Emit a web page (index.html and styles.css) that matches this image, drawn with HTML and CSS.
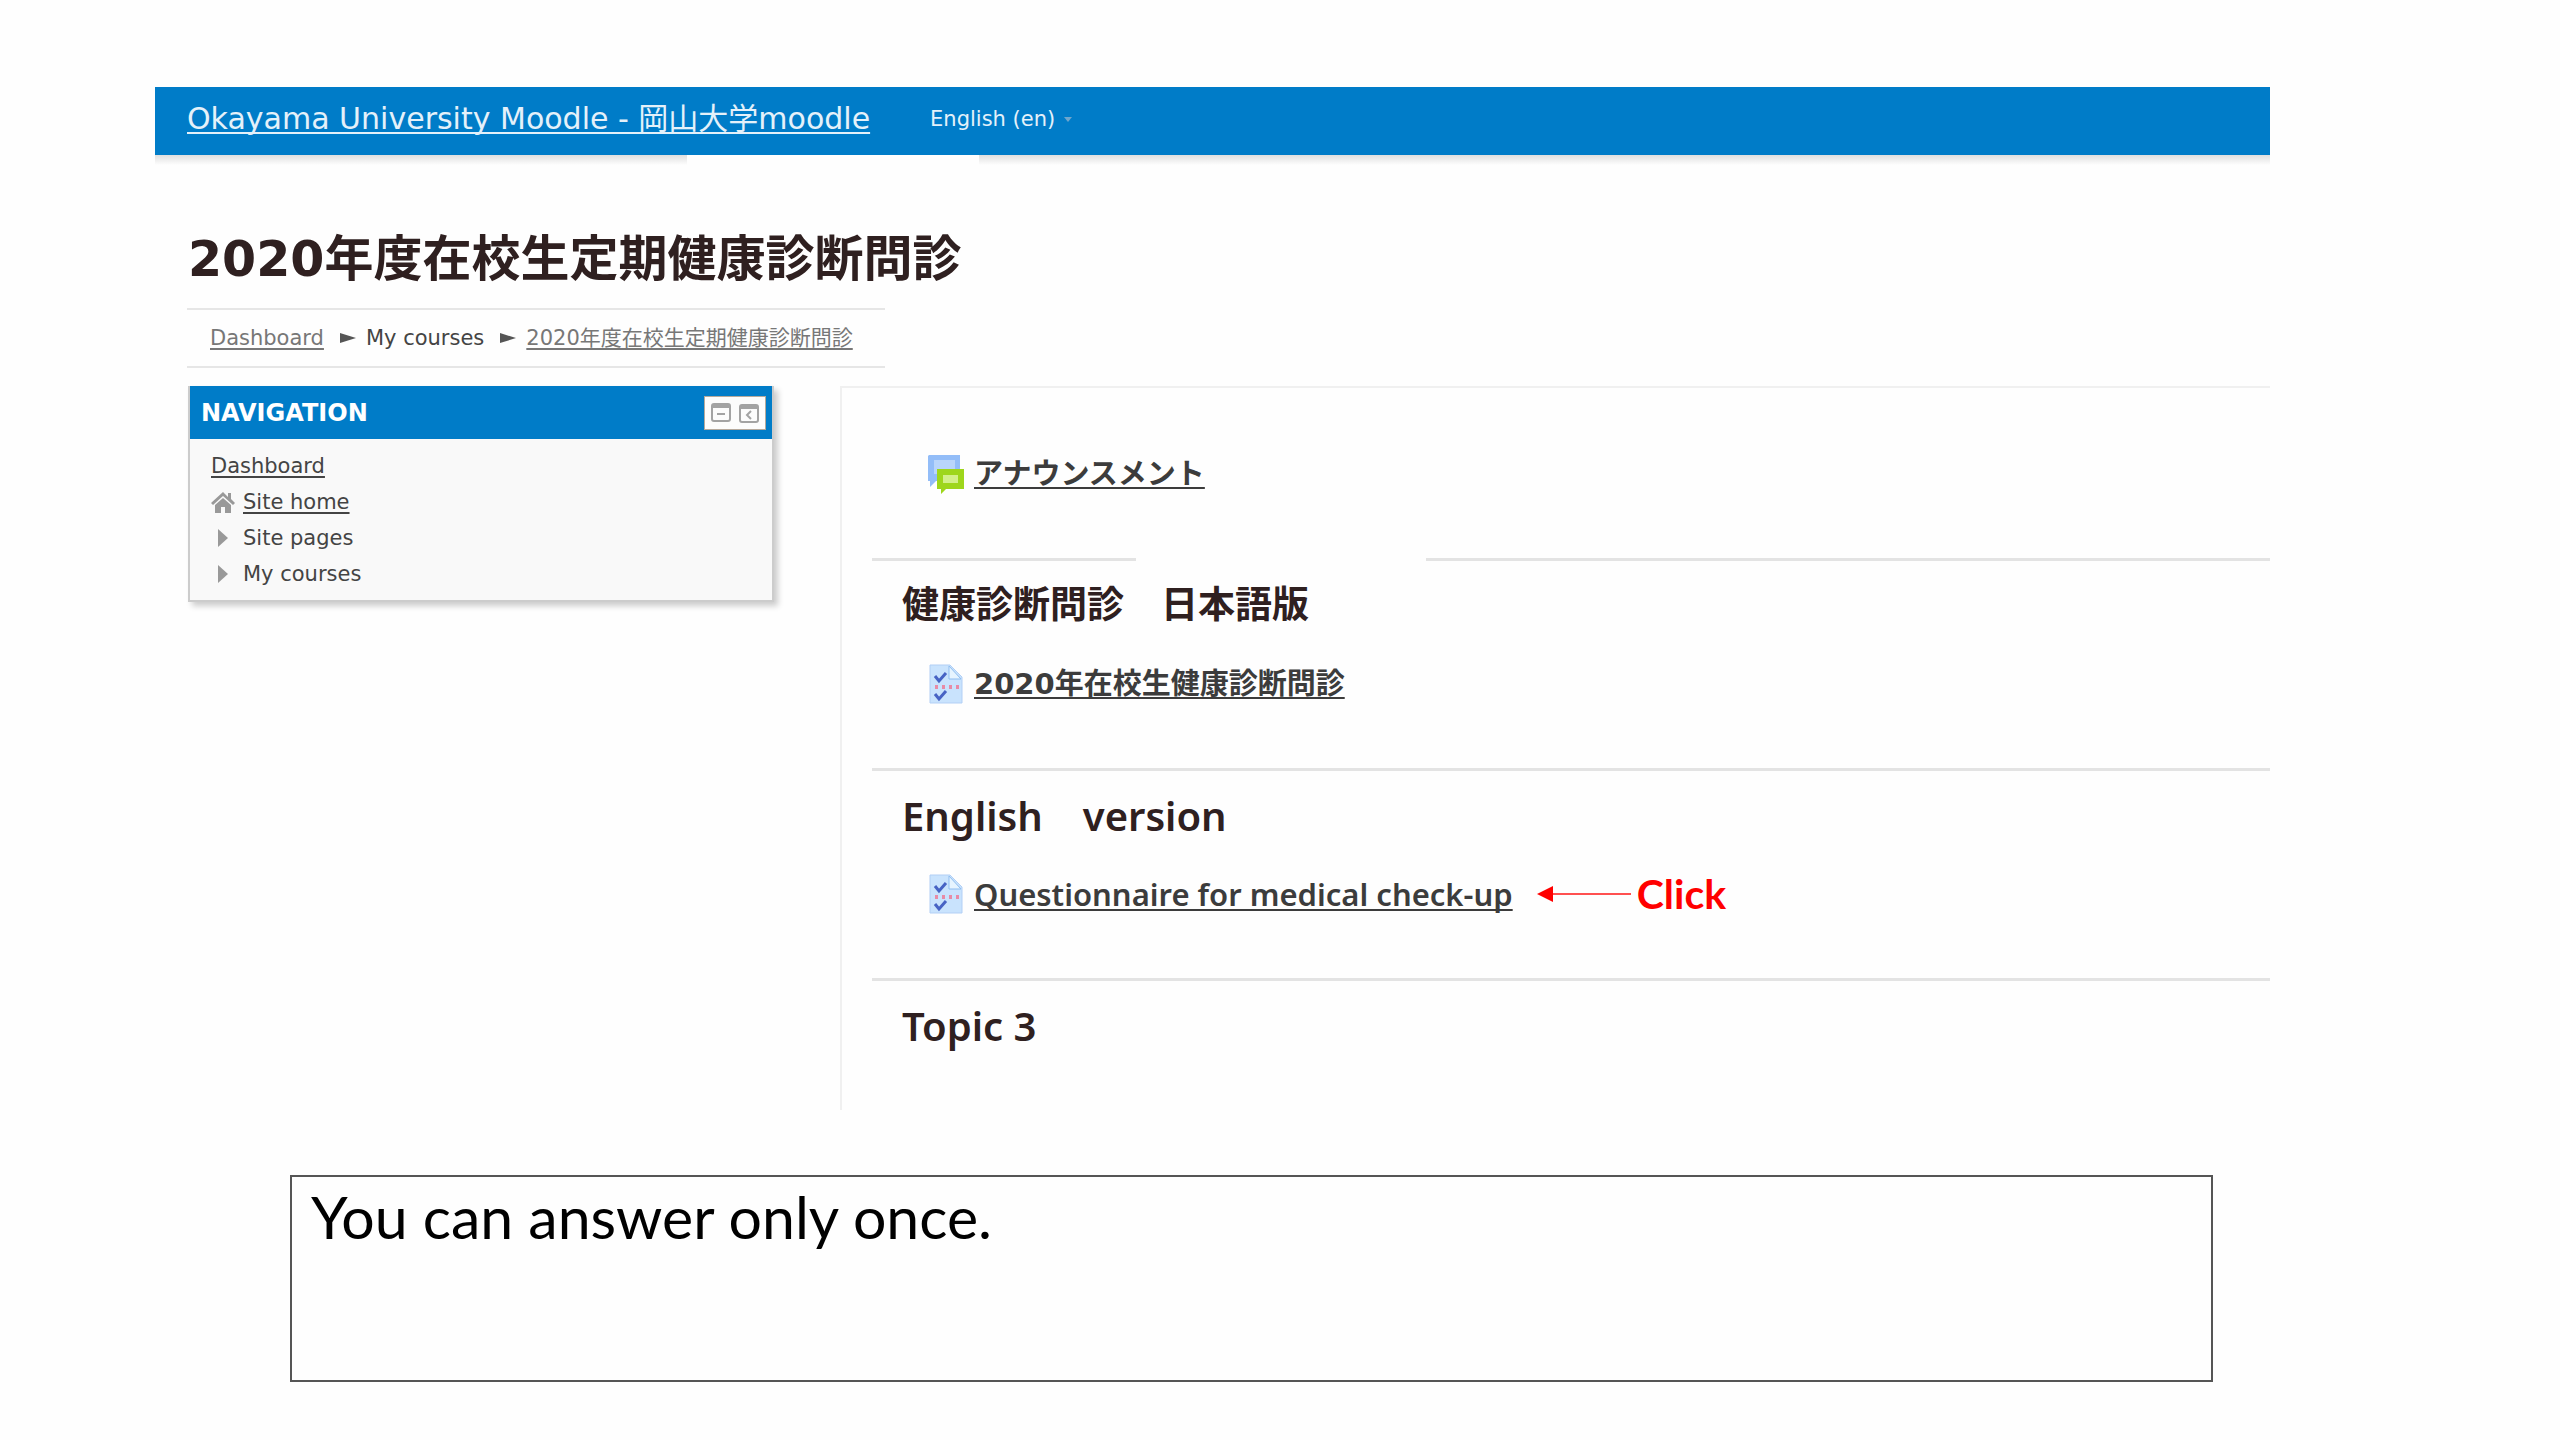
FILE: index.html
```html
<!DOCTYPE html>
<html lang="en">
<head>
    <meta charset="UTF-8">
    <meta name="viewport" content="width=device-width, initial-scale=1.0">
    <title>2020年度在校生定期健康診断問診</title>
    <link rel="stylesheet" href="styles.css">
</head>
<body>
    <!-- Shared activity icon -->
    <svg class="sprite" aria-hidden="true">
        <symbol id="icon-quiz" viewBox="0 0 34 40">
            <path d="M1 1h20l12 12v26H1z" fill="#c9e3fd" stroke="#b2cff5"/>
            <path d="M20 2v13h12z" fill="#e6f4ff" stroke="#8fbdf0"/>
            <path d="M6 12l4 5 7-8M6 30l4 5 7-8" fill="none" stroke="#4763c4" stroke-width="3"/>
            <path d="M6 23h25" stroke="#e88ba6" stroke-width="4" stroke-dasharray="3 4"/>
        </symbol>
    </svg>

    <div class="page">
        <header class="navbar">
            <a class="brand" href="#">Okayama University Moodle - 岡山大学moodle</a>
            <div class="language">
                <select aria-label="Language">
                    <option>English (en)</option>
                </select>
                <svg class="caret" viewBox="0 0 8 5" aria-hidden="true"><path d="M0 0h8l-4 5z"/></svg>
            </div>
        </header>
        <div class="navbar-shadow"><span></span><span></span></div>

        <h1>2020年度在校生定期健康診断問診</h1>

        <nav class="breadcrumb" aria-label="Breadcrumb">
            <a href="#">Dashboard</a>
            <svg viewBox="0 0 16 10" aria-hidden="true"><path d="M0 0l16 5-16 5z"/></svg>
            <span>My courses</span>
            <svg viewBox="0 0 16 10" aria-hidden="true"><path d="M0 0l16 5-16 5z"/></svg>
            <a href="#">2020年度在校生定期健康診断問診</a>
        </nav>

        <div class="columns">
            <aside class="block">
                <div class="block-header">
                    <h2>NAVIGATION</h2>
                    <div class="block-actions">
                        <button type="button" aria-label="Hide block">
                            <svg viewBox="0 0 20 20"><rect x="1" y="1" width="18" height="17" rx="2"/><path d="M1 3h18" stroke-width="4"/><path d="M6 11h8"/></svg>
                        </button>
                        <button type="button" aria-label="Dock block">
                            <svg viewBox="0 0 20 20"><rect x="1" y="2" width="18" height="17" rx="2"/><path d="M1 4h18" stroke-width="4"/><path d="M12 8l-4 4 4 4"/></svg>
                        </button>
                    </div>
                </div>
                <ul class="tree">
                    <li><a href="#">Dashboard</a></li>
                    <li>
                        <svg viewBox="0 0 24 22" aria-hidden="true"><path d="M12 1l5 5V2h3v6l4 4-2 2L12 5 2 14l-2-2z"/><path d="M4 14l8-7 8 7v8h-6v-6h-4v6H4z"/></svg>
                        <a href="#">Site home</a>
                    </li>
                    <li>
                        <svg viewBox="0 0 24 22" aria-hidden="true"><path d="M7 2l10 9-10 9z"/></svg>
                        <span>Site pages</span>
                    </li>
                    <li>
                        <svg viewBox="0 0 24 22" aria-hidden="true"><path d="M7 2l10 9-10 9z"/></svg>
                        <span>My courses</span>
                    </li>
                </ul>
            </aside>

            <main class="course">
                <section class="topic">
                    <div class="activity">
                        <svg class="activity-icon" viewBox="0 0 38 40" aria-hidden="true">
                            <path d="M2 1h31v26H9l-6 6V27H1V2z" fill="#93bdf8"/>
                            <path d="M7 6h21v14H7z" fill="#b9d5fb"/>
                            <path d="M10 15h27v20H19l-5 5v-5h-4z" fill="#9ed61c"/>
                            <path d="M16 21h15v8H16z" fill="#d3f08a"/>
                        </svg>
                        <a href="#">アナウンスメント</a>
                    </div>
                </section>

                <div class="divider divider-split"><span></span><span></span></div>
                <section class="topic">
                    <h3>健康診断問診　日本語版</h3>
                    <div class="activity">
                        <svg class="activity-icon" aria-hidden="true"><use href="#icon-quiz"/></svg>
                        <a href="#">2020年在校生健康診断問診</a>
                    </div>
                </section>

                <div class="divider"><span></span></div>
                <section class="topic">
                    <h3 class="latin">English　version</h3>
                    <div class="activity latin">
                        <svg class="activity-icon" aria-hidden="true"><use href="#icon-quiz"/></svg>
                        <a href="#">Questionnaire for medical check-up</a>
                        <span class="hint">
                            <svg viewBox="0 0 94 16" aria-hidden="true"><path d="M14 8h80" stroke="#ff5050" stroke-width="2"/><path d="M0 8l16-8v16z" fill="#ff0000"/></svg>
                            Click
                        </span>
                    </div>
                </section>

                <div class="divider"><span></span></div>
                <section class="topic">
                    <h3 class="latin">Topic 3</h3>
                </section>
            </main>
        </div>
    </div>

    <p class="note">You can answer only once.</p>
</body>
</html>
```
FILE: styles.css
```css
* {
    box-sizing: border-box;
}
body {
    margin: 0;
    padding: 87px 290px 56px 155px;
    background: #fefefe;
    color: #444;
    font-family: "DejaVu Sans", "Noto Sans CJK JP", sans-serif;
    font-size: 21px;
}
h1, h2, h3, p, ul {
    margin: 0;
    padding: 0;
}
a {
    color: inherit;
    text-decoration: underline;
    text-decoration-thickness: 2px;
    text-underline-offset: 3px;
    text-decoration-skip-ink: none;
}
.sprite {
    display: none;
}

/* Top bar */
.navbar {
    display: flex;
    align-items: center;
    gap: 60px;
    height: 68px;
    padding: 0 32px 4px;
    background: #007cc8;
    color: #e4f1fa;
}
.brand {
    font-size: 30px;
    line-height: 36px;
}
.language {
    display: flex;
    align-items: center;
    gap: 8px;
}
.language select {
    appearance: none;
    padding: 0;
    border: 0;
    background: none;
    color: inherit;
    font: inherit;
}
.caret {
    width: 8px;
    height: 5px;
    fill: #6fa6cc;
}
.navbar-shadow {
    display: flex;
    gap: 292px;
    height: 10px;
}
.navbar-shadow span {
    width: 532px;
    background: linear-gradient(#dfdfdf, #fefefe);
}
.navbar-shadow span:last-child {
    flex: 1;
}

/* Heading and breadcrumb */
h1 {
    padding: 60px 33px 13px;
    color: #2f2020;
    font-size: 49px;
    line-height: 70px;
}
.breadcrumb {
    display: flex;
    align-items: center;
    width: fit-content;
    height: 60px;
    margin: 0 32px;
    padding: 0 32px 0 23px;
    border: solid #e6e6e6;
    border-width: 2px 0;
    line-height: 28px;
}
.breadcrumb a {
    color: #777;
}
.breadcrumb svg {
    width: 16px;
    height: 10px;
    margin: 0 10px 0 16px;
    fill: #555;
}

.columns {
    display: flex;
    align-items: flex-start;
    gap: 66px;
    padding: 18px 0 0 33px;
}

/* Navigation block */
.block {
    width: 586px;
    border: 2px solid #ccc;
    border-top: 0;
    background: #f9f9f9;
    box-shadow: 4px 4px 6px rgba(0, 0, 0, 0.2);
}
.block-header {
    display: flex;
    align-items: center;
    justify-content: space-between;
    height: 53px;
    padding: 0 6px 0 11px;
    background: #007cc8;
}
.block h2 {
    color: #fff;
    font-size: 24px;
}
.block-actions {
    display: flex;
    align-items: center;
    justify-content: center;
    gap: 8px;
    width: 62px;
    height: 34px;
    border: 1px solid #b5a99c;
    background: #fcfcfc;
}
.block-actions button {
    display: flex;
    padding: 0;
    border: 0;
    background: none;
}
.block-actions svg {
    width: 20px;
    height: 20px;
    fill: none;
    stroke: #a3a3a3;
    stroke-width: 2;
}
.tree {
    padding: 9px 21px 8px;
    list-style: none;
}
.tree li {
    display: flex;
    align-items: center;
    gap: 8px;
    height: 36px;
}
.tree svg {
    width: 24px;
    height: 22px;
    fill: #999;
}

/* Course content */
.course {
    flex: 1;
    min-height: 724px;
    border-top: 2px solid #f0f0f0;
    border-left: 2px solid #f0f0f0;
    padding: 62px 0 0 30px;
}
.topic {
    padding: 0 30px 60px;
}
.topic:last-child {
    padding-bottom: 0;
}
.divider {
    display: flex;
    gap: 290px;
    padding-bottom: 21px;
}
.divider span {
    flex: 1;
    height: 3px;
    background: #e3e3e3;
}
.divider-split span:first-child {
    flex: none;
    width: 264px;
}
h3 {
    margin-bottom: 30px;
    color: #2f2020;
    font-size: 37px;
    line-height: 48px;
}
.activity {
    display: flex;
    align-items: center;
    gap: 9px;
    height: 48px;
    padding-left: 25px;
    color: #3c3c3c;
    font-size: 29px;
    font-weight: bold;
    line-height: 36px;
}
.latin {
    font-family: "Noto Sans", "Noto Sans CJK JP", sans-serif;
    font-weight: 600;
}
h3.latin {
    font-size: 40px;
}
.activity.latin {
    font-size: 31px;
}
.activity-icon {
    width: 38px;
    height: 40px;
}
.hint {
    display: flex;
    align-items: center;
    gap: 6px;
    margin-left: 15px;
    color: #ff0000;
    font-family: Lato, sans-serif;
    font-size: 41px;
    font-weight: bold;
}
.hint svg {
    width: 94px;
    height: 16px;
}

/* Boxed note under the page */
.note {
    min-height: 207px;
    margin: 65px 57px 0 135px;
    padding: 5px 19px;
    border: 2px solid #555;
    color: #000;
    font-family: Lato, sans-serif;
    font-size: 59px;
    line-height: 70px;
}
```
